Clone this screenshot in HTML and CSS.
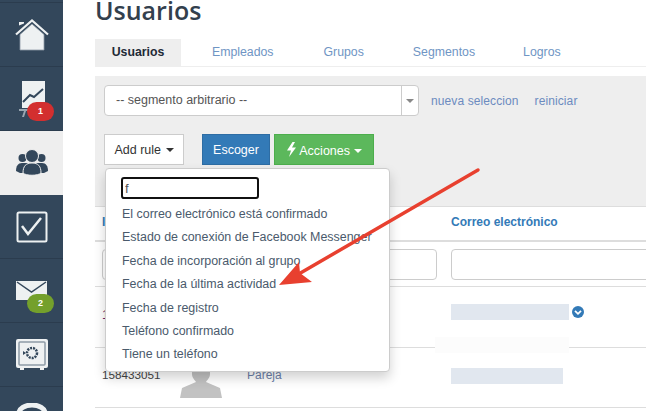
FILE: index.html
```html
<!DOCTYPE html>
<html lang="es">
<head>
<meta charset="utf-8">
<title>Usuarios</title>
<link rel="stylesheet" href="styles.css">
</head>
<body>
<div class="app">
  <nav class="sidebar">
    <div class="nav-top"></div>
    <a class="nav-item">
      <svg class="icon" width="34" height="32" viewBox="0 0 34 32"><path d="M4 6.500V3h5v1.500z" fill="#eef1f2"/><path d="M1 15.500 17 1.500l16 14" fill="none" stroke="#eef1f2" stroke-width="2.200"/><path d="M5 15.500 17 5l12 10.500V31H5z" fill="#eef1f2" stroke="#8d9aa6" stroke-width=".8"/></svg>
    </a>
    <a class="nav-item">
      <svg class="icon" width="26" height="36" viewBox="0 0 26 36"><path d="M3 0h23v27H3z" fill="#eef1f2"/><path d="M4 21l7-7 4 2 9-8" fill="none" stroke="#33475b" stroke-width="2"/><path d="M0 28h14v2H0zM5 30h2l-2 6H3z" fill="#9aa7b2"/></svg>
      <span class="badge badge-red">1</span>
    </a>
    <a class="nav-item nav-active">
      <svg class="icon" width="32" height="28" viewBox="0 0 32 28"><circle cx="6.500" cy="9" r="4" fill="#33475b"/><circle cx="25.500" cy="9" r="4" fill="#33475b"/><path d="M0 22c0-5 2-8 6-8h20c4 0 6 3 6 8l-4 2H4z" fill="#33475b"/><circle cx="16" cy="7" r="6.500" fill="#33475b" stroke="#eee"/><path d="M7 24c0-7 3-10 9-10s9 3 9 10c-3 3-15 3-18 0z" fill="#33475b" stroke="#eee"/></svg>
    </a>
    <a class="nav-item">
      <svg class="icon" width="32" height="32" viewBox="0 0 32 32"><rect x="1.500" y="1.500" width="29" height="29" rx="1.500" fill="none" stroke="#eef1f2" stroke-width="2"/><path d="M6 15l6 8L25 7" fill="none" stroke="#eef1f2" stroke-width="2.500"/></svg>
    </a>
    <a class="nav-item">
      <svg class="icon" width="31" height="20" viewBox="0 0 31 20"><path d="M0 0h31v19H0z" fill="#eef1f2"/><path d="M1 1l14.500 10L30 1" fill="none" stroke="#33475b" stroke-width="1.500"/></svg>
      <span class="badge badge-green">2</span>
    </a>
    <a class="nav-item">
      <svg class="icon" width="32" height="31" viewBox="0 0 32 31"><rect width="32" height="29" rx="2" fill="#eef1f2"/><rect x="3" y="3" width="26" height="23" rx="1" fill="none" stroke="#8d9aa6" stroke-width="1.500"/><circle cx="16" cy="14" r="5" fill="none" stroke="#33475b" stroke-width="2.500" stroke-dasharray="2 1"/><path d="M7 12l3 2-3 2z" fill="#33475b"/><path d="M4 29h4v2H4zM24 29h4v2h-4z" fill="#eef1f2"/></svg>
    </a>
    <a class="nav-item">
      <svg class="icon" width="32" height="32" viewBox="0 0 32 32"><path d="M3 10a13 8 0 0 1 26 0" fill="none" stroke="#eef1f2" stroke-width="5"/></svg>
    </a>
  </nav>

  <main class="main">
    <h1 class="title">Usuarios</h1>
    <ul class="tabs">
      <li class="tab tab-active">Usuarios</li>
      <li class="tab tab-e">Empleados</li>
      <li class="tab tab-g">Grupos</li>
      <li class="tab tab-s">Segmentos</li>
      <li class="tab tab-l">Logros</li>
    </ul>

    <section class="panel">
      <div class="segment-row">
        <div class="select">
          <span class="select-text">-- segmento arbitrario --</span>
          <span class="select-arrow"><i class="caret caret-grey"></i></span>
        </div>
        <a class="link link-new">nueva seleccion</a>
        <a class="link">reiniciar</a>
      </div>
      <div class="button-row">
        <button class="btn btn-default">Add rule <i class="caret"></i></button>
        <button class="btn btn-blue">Escoger</button>
        <button class="btn btn-green">
          <svg width="11" height="15" viewBox="0 0 11 15"><path d="M6.500 0 1 8.500h4L3 15l7-9.500H6L9 0z" fill="#fff"/></svg>
          Acciones <i class="caret"></i>
        </button>
      </div>
      <div class="dropdown">
        <input class="search" type="text" value="f">
        <ul class="menu">
          <li>El correo electrónico está confirmado</li>
          <li>Estado de conexión de Facebook Messenger</li>
          <li>Fecha de incorporación al grupo</li>
          <li>Fecha de la última actividad</li>
          <li>Fecha de registro</li>
          <li>Teléfono confirmado</li>
          <li>Tiene un teléfono</li>
        </ul>
      </div>
    </section>

    <div class="table">
      <div class="row row-head">
        <span class="col-id head-cell">I</span>
        <span class="col-photo"></span>
        <span class="col-name"></span>
        <span class="col-email head-cell">Correo electrónico</span>
      </div>
      <div class="row row-filter">
        <span class="col-id"><span class="filter"></span></span>
        <span class="col-photo"></span>
        <span class="col-name"><span class="filter"></span></span>
        <span class="col-email"><span class="filter"></span></span>
      </div>
      <div class="row row-data row-one">
        <span class="col-id id-purple">1</span>
        <span class="col-photo"></span>
        <span class="col-name"></span>
        <span class="col-email email-cell">
          <span class="blur blur-a"></span>
          <svg class="chevron" width="12" height="12" viewBox="0 0 12 12"><circle cx="6" cy="6" r="6" fill="#337ab7"/><path d="M3 4.800 6 7.800 9 4.800" fill="none" stroke="#fff" stroke-width="1.800"/></svg>
        </span>
        <span class="smudge"></span>
      </div>
      <div class="row row-data row-two">
        <span class="col-id id-plain">158433051</span>
        <span class="col-photo">
          <svg class="avatar" width="42" height="38" viewBox="0 0 42 38"><path d="M12 0h18v14c0 4-3 6-4 8l14 6 2 10H0l2-10 14-6c-1-2-4-4-4-8z" fill="#c2c2c2"/></svg>
        </span>
        <span class="col-name name-link">Pareja</span>
        <span class="col-email"><span class="blur blur-b"></span></span>
      </div>
    </div>
  </main>
</div>

<svg class="arrow" width="205" height="122" viewBox="0 0 205 122">
  <path d="M199 3 18 108" fill="none" stroke="#e8402f" stroke-width="3.500" stroke-linecap="round"/>
  <path d="M0 118 20 95 21 106 33 115z" fill="#e8402f"/>
</svg>
</body>
</html>
```

FILE: styles.css
```css
* { box-sizing: border-box; }
html, body {
  margin: 0;
  padding: 0;
  width: 646px;
  height: 411px;
  overflow: hidden;
  background: #fff;
  font-family: "Liberation Sans", Arial, sans-serif;
  font-size: 13px;
  color: #333;
}
.app { display: flex; height: 411px; overflow: hidden; }

.sidebar {
  flex: 0 0 63px;
  background: #33475b;
  display: flex;
  flex-direction: column;
}
.nav-top { height: 3px; flex: none; border-bottom: 1px solid #2b3c4e; }
.nav-item {
  position: relative;
  flex: 0 0 64px;
  display: flex;
  align-items: center;
  justify-content: center;
  border-bottom: 1px solid #2b3c4e;
}
.nav-active { background: #eee; border-bottom-color: #eee; }
.badge {
  position: absolute;
  left: 27px;
  top: 35px;
  width: 27px;
  height: 19px;
  border-radius: 10px;
  color: #fff;
  font-size: 9px;
  font-weight: bold;
  line-height: 19px;
  text-align: center;
}
.badge-red { background: #d32f2f; }
.badge-green { background: #74a02c; }

.main { flex: 1; min-width: 0; padding-left: 32px; }
.title {
  margin: 0;
  height: 39px;
  font-family: "Open Sans", sans-serif;
  font-size: 25px;
  line-height: 21px;
  font-weight: 600;
  color: #33404d;
}
.tabs {
  list-style: none;
  margin: 0;
  padding: 0;
  height: 28px;
  display: flex;
  border-bottom: 1px solid #eee;
}
.tab { line-height: 27px; color: #6f95c4; text-align: center; font-size: 12.300px; }
.tab-active { width: 86px; background: #eee; color: #1f2a36; font-weight: bold; }
.tab-e { margin-left: 31px; }
.tab-g { margin-left: 50px; }
.tab-s { margin-left: 49px; }
.tab-l { margin-left: 48px; }

.panel {
  position: relative;
  margin-top: 9px;
  height: 131px;
  background: #eee;
  border-bottom: 1px solid #ddd;
  padding: 9px 9px 0;
}
.segment-row { display: flex; align-items: center; height: 31px; }
.select {
  width: 315px;
  height: 31px;
  display: flex;
  background: #fff;
  border: 1px solid #ccc;
  border-radius: 4px;
}
.select-text { flex: 1; padding-left: 11px; line-height: 29px; color: #555; font-size: 12.500px; }
.select-arrow {
  width: 17px;
  border-left: 1px solid #ccc;
  display: flex;
  align-items: center;
  justify-content: center;
}
.link { color: #6c8bc0; font-size: 12px; letter-spacing: .1px; }
.link-new { margin: 0 16px 0 12px; }
.caret {
  display: inline-block;
  width: 0;
  height: 0;
  margin-left: 1px;
  vertical-align: middle;
  border-top: 4px solid currentColor;
  border-left: 4px solid transparent;
  border-right: 4px solid transparent;
}
.caret-grey { color: #888; margin: 0; }
.button-row { display: flex; margin-top: 18px; height: 31px; }
.btn {
  height: 31px;
  padding: 0;
  font: 12.500px "Liberation Sans", Arial, sans-serif;
  border: 1px solid transparent;
}
.btn-default { width: 80px; background: #fff; border-color: #ccc; color: #333; }
.btn-blue { width: 68px; margin-left: 18px; background: #337ab7; border-color: #2e6da4; color: #fff; }
.btn-green { width: 100px; margin-left: 4px; background: #5cb85c; border-color: #4cae4c; color: #fff; }
.btn-green svg { vertical-align: -2px; }

.dropdown {
  position: absolute;
  left: 10px;
  top: 92px;
  width: 285px;
  height: 204px;
  z-index: 5;
  background: #fff;
  border: 1px solid #ccc;
  border-radius: 4px;
  box-shadow: 0 6px 12px rgba(0, 0, 0, .18);
  padding: 8px 0 0 15px;
}
.search {
  display: block;
  width: 138px;
  height: 22px;
  padding: 0 0 0 2px;
  border: 2px solid #111;
  border-radius: 3px;
  font: 13px "Liberation Sans", Arial, sans-serif;
  color: #555;
  outline: none;
}
.menu { list-style: none; margin: 4px 0 0 1px; padding: 0; }
.menu li { height: 23.400px; line-height: 23px; color: #4a5a6c; font-size: 12.450px; white-space: nowrap; }

.table { position: relative; }
.row { display: flex; align-items: center; border-bottom: 1px solid #ddd; padding-left: 7px; }
.row-head { height: 35px; border-bottom: 2px solid #ddd; padding-bottom: 4px; }
.row-filter { height: 45px; }
.row-one { position: relative; height: 61px; }
.row-two { height: 60px; }
.col-id { flex: 0 0 78px; }
.col-photo { flex: 0 0 67px; align-self: stretch; position: relative; }
.col-name { flex: 0 0 204px; }
.col-email { flex: 1; }
.head-cell { font-weight: bold; color: #337ab7; font-size: 12px; }
.filter {
  display: block;
  height: 31px;
  background: #fff;
  border: 1px solid #ccc;
  border-radius: 4px;
}
.col-name .filter { margin-right: 14px; }
.col-email .filter { margin-right: -10px; }
.id-purple { color: #6b2a6b; margin-top: -6px; }
.id-plain { color: #444; font-size: 11.700px; margin-top: -6px; }
.name-link { color: #6c7fa8; font-size: 12px; margin-top: -6px; }
.email-cell { display: flex; align-items: center; gap: 3px; margin-top: -10px; }
.blur { display: block; height: 16px; background: #e1e7ef; }
.blur-a { width: 118px; }
.blur-b { width: 112px; margin-top: -3px; }
.avatar { position: absolute; left: 0; bottom: 9px; }
.chevron { flex: none; }
.smudge {
  position: absolute;
  left: 340px;
  top: 50px;
  width: 134px;
  height: 16px;
  background: #fcfcfc;
}

.arrow { position: fixed; left: 279px; top: 167px; z-index: 9; }
```
